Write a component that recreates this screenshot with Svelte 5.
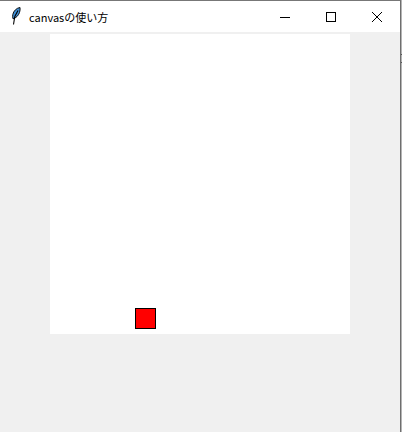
<script>
  const title = "canvasの使い方";
</script>

<div class="window">
  <header class="titlebar">
    <svg class="feather" width="10" height="18" viewBox="0 0 10 18">
      <path d="M9 .5C5.500 1 2.500 4 1.800 7.500 1.500 9 1.600 10.500 2 11.800 5 11 7.500 8.500 8.500 5.500 9 3.800 9.300 2 9 .5z" fill="#3f8fd6" stroke="#111" stroke-width="1"/>
      <path d="M7 3.500 3.800 9.500 2.500 17.500" fill="none" stroke="#000" stroke-width="1.100"/>
    </svg>
    <span class="title">{title}</span>
    <div class="controls">
      <button aria-label="minimize">
        <svg width="12" height="12" viewBox="0 0 12 12"><path d="M1 6.500h10" stroke="#000" fill="none"/></svg>
      </button>
      <button aria-label="maximize">
        <svg width="12" height="12" viewBox="0 0 12 12"><rect x="1.500" y="1.500" width="9" height="9" stroke="#000" fill="none"/></svg>
      </button>
      <button aria-label="close">
        <svg width="12" height="12" viewBox="0 0 12 12"><path d="M1 1l10 10M11 1 1 11" stroke="#000" fill="none"/></svg>
      </button>
    </div>
  </header>
  <main class="body">
    <div class="canvas">
      <div class="player"></div>
    </div>
  </main>
  <i class="tick tick-a"></i>
  <i class="tick tick-b"></i>
</div>

<style>
  :global(body) {
    background: #fff;
  }

  .window {
    position: relative;
    box-sizing: border-box;
    width: 401px;
    height: 432px;
    display: flex;
    flex-direction: column;
    border-top: 1px solid #777;
    border-right: 1px solid #6e6e6e;
    box-shadow: 1px 0 0 #b4b4b4;
    background: #f0f0f0;
  }

  .titlebar {
    height: 31px;
    display: flex;
    align-items: center;
    background: #fff;
    padding-left: 11px;
    font-family: "Noto Sans CJK JP", "Noto Sans", sans-serif;
    font-size: 11px;
    color: #000;
  }

  .feather {
    margin-top: -2px;
  }

  .title {
    margin-left: 8px;
  }

  .controls {
    margin-left: auto;
    display: flex;
  }

  .controls button {
    width: 46px;
    height: 31px;
    padding: 0;
    border: none;
    background: none;
    display: flex;
    align-items: center;
    justify-content: center;
  }

  .body {
    flex: 1;
    padding-top: 2px;
  }

  .canvas {
    position: relative;
    width: 300px;
    height: 300px;
    margin-left: 50px;
    background: #fff;
  }

  .player {
    position: absolute;
    left: 85px;
    top: 274px;
    width: 19px;
    height: 19px;
    background: #f00;
    border: 1px solid #000;
  }

  .tick {
    position: absolute;
    right: -2px;
    width: 1px;
    height: 1px;
    background: #555;
  }

  .tick-a {
    top: 53px;
  }

  .tick-b {
    top: 61px;
  }
</style>
